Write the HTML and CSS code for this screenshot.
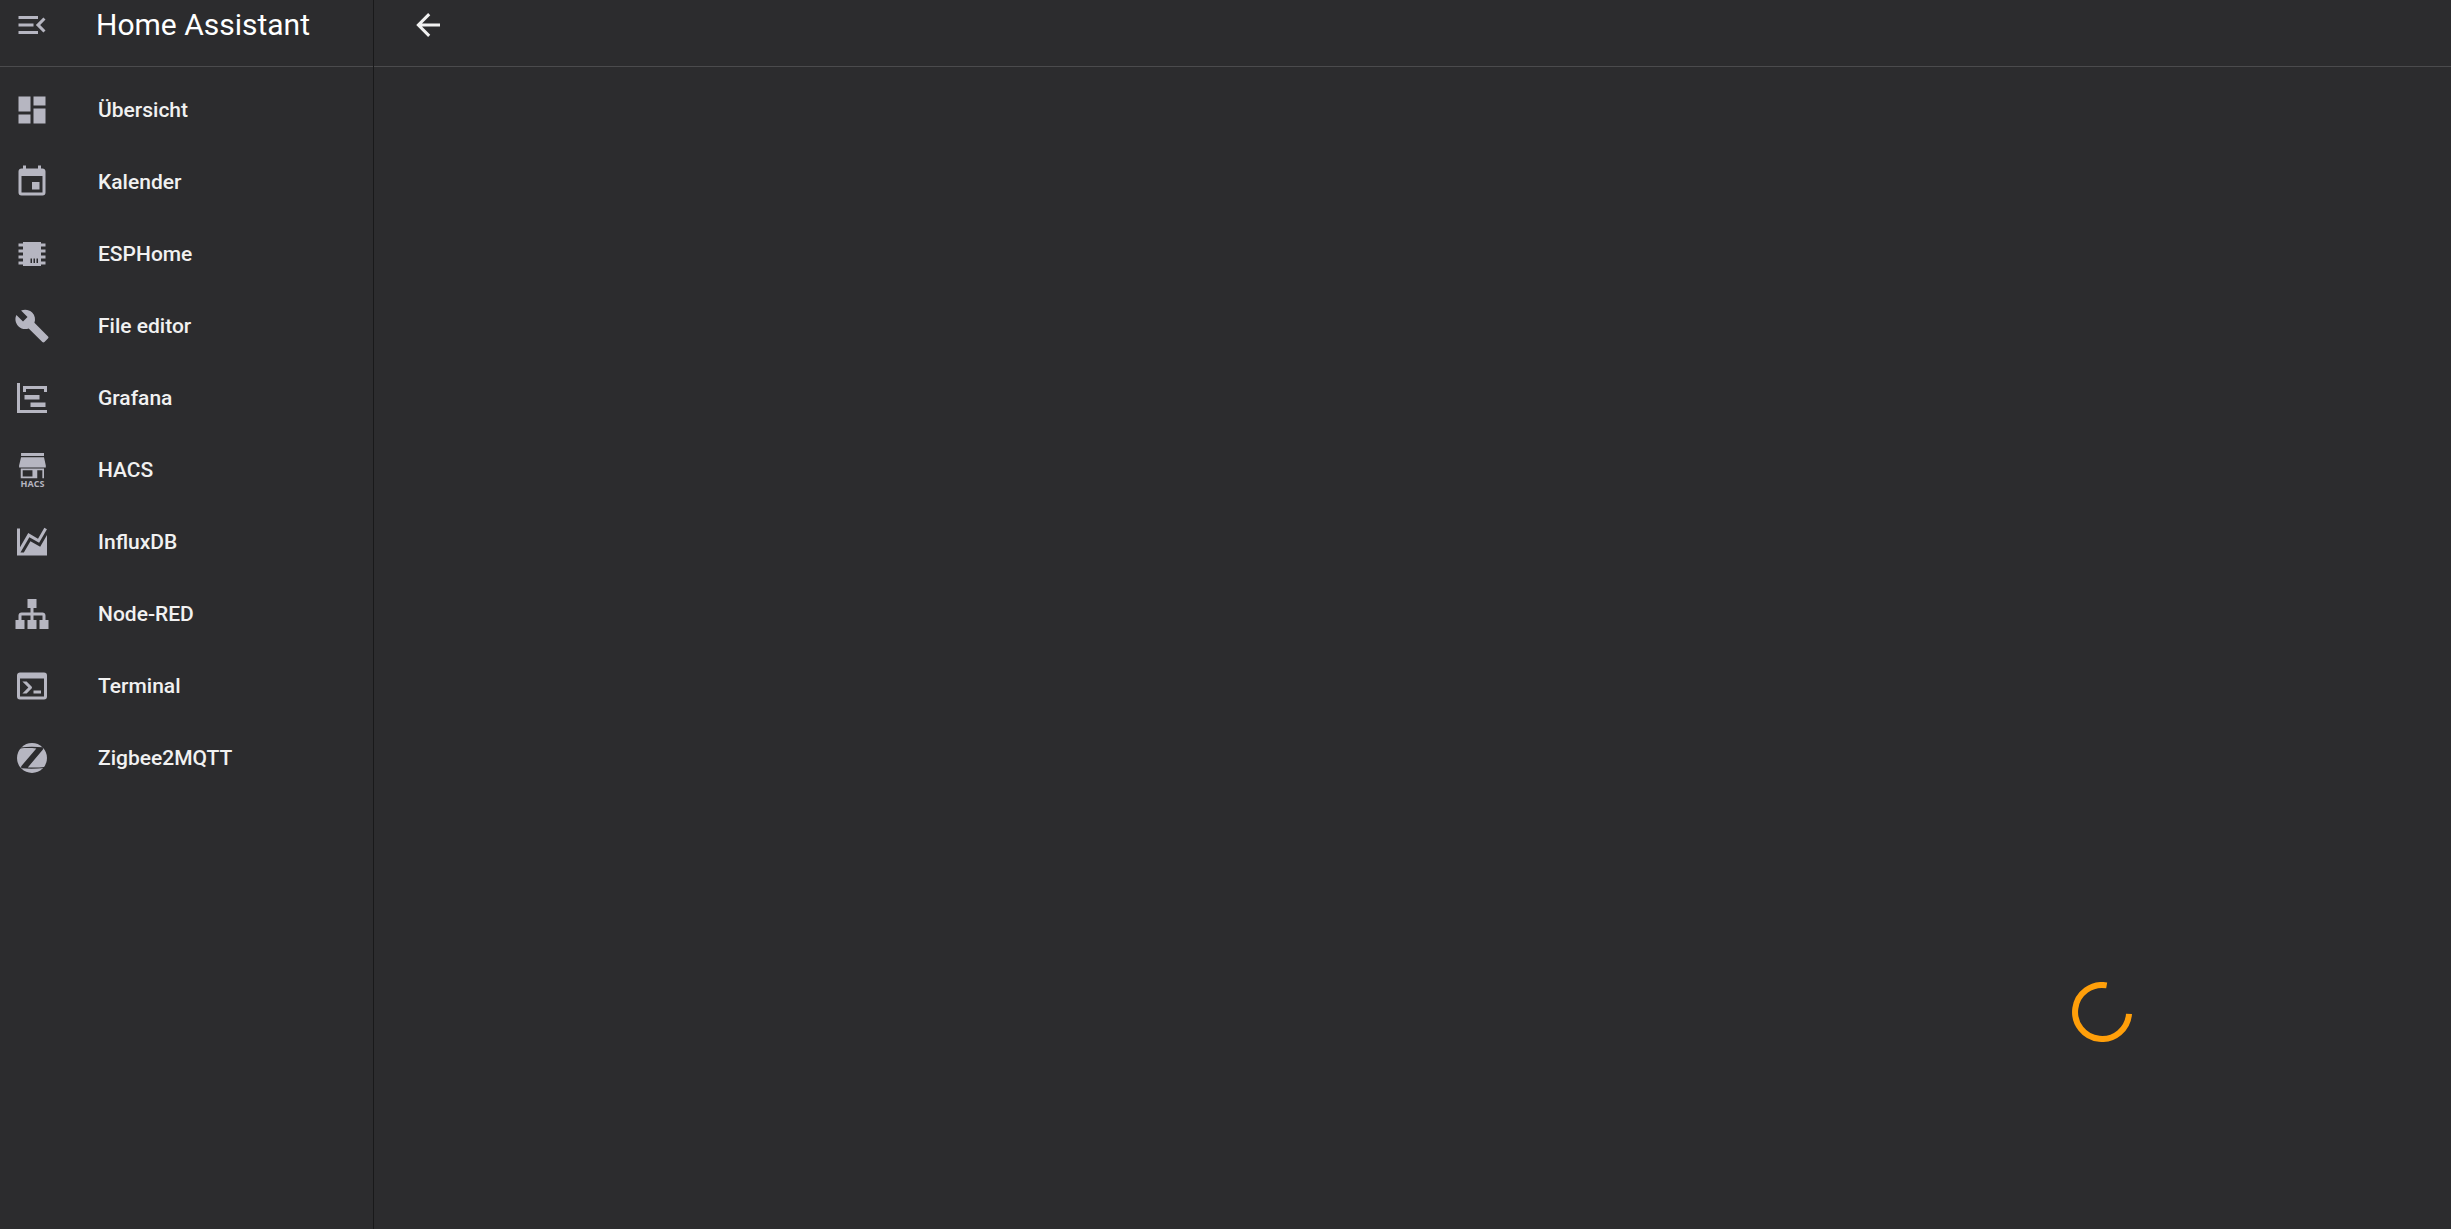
FILE: index.html
```
<!DOCTYPE html>
<html lang="de">
<head>
    <meta charset="UTF-8">
    <meta name="viewport" content="width=device-width, initial-scale=1.0">
    <title>Home Assistant</title>
    <link rel="stylesheet" href="styles.css">
</head>
<body>
    <aside class="sidebar">
        <div class="sidebar-header">
            <button class="icon-btn" type="button" aria-label="Seitenleiste umschalten">
                <svg class="icon" viewBox="0 0 24 24"><path d="M21,15.61L19.59,17L14.58,12L19.59,7L21,8.39L17.44,12L21,15.61M3,6H16V8H3V6M3,13V11H13V13H3M3,18V16H16V18H3Z"/></svg>
            </button>
            <span class="title">Home Assistant</span>
        </div>
        <nav class="menu">
            <a class="menu-item" href="#">
                <svg class="icon" viewBox="0 0 24 24"><path d="M13,3V9H21V3M13,21H21V11H13M3,21H11V15H3M3,13H11V3H3V13Z"/></svg>
                <span>Übersicht</span>
            </a>
            <a class="menu-item" href="#">
                <svg class="icon" viewBox="0 0 24 24"><path d="M19,19H5V8H19M16,1V3H8V1H6V3H5C3.89,3 3,3.89 3,5V19A2,2 0 0,0 5,21H19A2,2 0 0,0 21,19V5C21,3.89 20.1,3 19,3H18V1M17,12H12V17H17V12Z"/></svg>
                <span>Kalender</span>
            </a>
            <a class="menu-item" href="#">
                <svg class="icon" viewBox="0 0 24 24"><path fill-rule="evenodd" d="M6,4H18V5H21V7H18V9H21V11H18V13H21V15H18V17H21V19H18V20H6V19H3V17H6V15H3V13H6V11H3V9H6V7H3V5H6V4M11,15V18H12V15H11M13,15V18H14V15H13M15,15V18H16V15H15Z"/></svg>
                <span>ESPHome</span>
            </a>
            <a class="menu-item" href="#">
                <svg class="icon" viewBox="0 0 24 24"><path d="M22.7,19L13.6,9.9C14.5,7.6 14,4.9 12.1,3C10.1,1 7.1,0.6 4.7,1.7L9,6L6,9L1.6,4.7C0.4,7.1 0.9,10.1 2.9,12.1C4.8,14 7.5,14.5 9.8,13.6L18.9,22.7C19.3,23.1 19.9,23.1 20.3,22.7L22.6,20.4C23.1,20 23.1,19.3 22.7,19Z"/></svg>
                <span>File editor</span>
            </a>
            <a class="menu-item" href="#">
                <svg class="icon" viewBox="0 0 24 24"><path d="M2,2H4V20H22V22H2V2M7,10H17V13H7V10M11,15H21V18H11V15M6,4H22V8H20V6H8V8H6V4Z"/></svg>
                <span>Grafana</span>
            </a>
            <a class="menu-item" href="#">
                <svg class="icon" viewBox="0 0 24 24">
                    <path fill-rule="evenodd" d="M4.7,0.7H20V2.7H4.7V0.7M4.7,3.5H20L21.2,9V10.3H3.4V9L4.7,3.5M4.5,11H20V17.5H18.9V12.2H15.5V17.5H4.5V11M5.8,12.2V16.3H12.3V12.2H5.8Z"/>
                    <text class="icon-text" x="12.3" y="23.2">HACS</text>
                </svg>
                <span>HACS</span>
            </a>
            <a class="menu-item" href="#">
                <svg class="icon" viewBox="0 0 24 24"><path d="M17.45,15.18L22,7.31V19L22,21H2V3H4V15.54L9.5,6L16,9.78L20.24,2.45L21.97,3.45L16.74,12.5L10.23,8.75L4.31,19H6.57L10.96,11.44L17.45,15.18Z"/></svg>
                <span>InfluxDB</span>
            </a>
            <a class="menu-item" href="#">
                <svg class="icon" viewBox="0 0 24 24"><path d="M9,2V8H11V11H5C3.89,11 3,11.89 3,13V16H1V22H7V16H5V13H11V16H9V22H15V16H13V13H19V16H17V22H23V16H21V13C21,11.89 20.11,11 19,11H13V8H15V2H9Z"/></svg>
                <span>Node-RED</span>
            </a>
            <a class="menu-item" href="#">
                <svg class="icon" viewBox="0 0 24 24"><path d="M20,19V7H4V19H20M20,3A2,2 0 0,1 22,5V19A2,2 0 0,1 20,21H4A2,2 0 0,1 2,19V5C2,3.89 2.9,3 4,3H20M13,17V15H18V17H13M9.58,13L5.57,9H8.4L11.7,12.3C12.09,12.69 12.09,13.33 11.7,13.72L8.42,17H5.59L9.58,13Z"/></svg>
                <span>Terminal</span>
            </a>
            <a class="menu-item" href="#">
                <svg class="icon" viewBox="0 0 24 24">
                    <circle cx="12" cy="12" r="10"/>
                    <path class="cutout" d="M4.5,5C9,4.4 14,4.4 19.3,4.9V6.3L9.2,18.3C13,18.5 17,18.4 20.4,18V18.6C15,19.2 10,19.3 4.8,18.8V17.5L14.9,5.6C11,5.2 8,5.2 4,5.6Z"/>
                </svg>
                <span>Zigbee2MQTT</span>
            </a>
        </nav>
    </aside>

    <main class="panel">
        <header class="toolbar">
            <button class="icon-btn back-btn" type="button" aria-label="Zurück">
                <svg class="icon" viewBox="0 0 24 24"><path d="M20,11V13H8L13.5,18.5L12.08,19.92L4.16,12L12.08,4.08L13.5,5.5L8,11H20Z"/></svg>
            </button>
        </header>
        <div class="content">
            <svg class="spinner" viewBox="0 0 60 60" role="img" aria-label="Wird geladen"><path d="M34.7,3.4A27,27 0 1,0 57,31.9"/></svg>
        </div>
    </main>
</body>
</html>
```
FILE: styles.css
```
* {
    box-sizing: border-box;
}

body {
    margin: 0;
    min-height: 100vh;
    display: flex;
    background-color: #2c2c2e;
    color: #f1f1f1;
    font-family: Roboto, sans-serif;
}

.sidebar {
    width: 374px;
    flex-shrink: 0;
    border-right: 1px solid #19191a;
}

.sidebar-header,
.toolbar {
    display: flex;
    align-items: center;
    height: 67px;
    padding-bottom: 16px;
    border-bottom: 1px solid #4b4b4d;
}

.sidebar-header {
    gap: 46px;
    padding-left: 14px;
}

.title {
    color: #fff;
    font-size: 30px;
    line-height: 40px;
}

.icon-btn {
    display: flex;
    padding: 0;
    border: none;
    background: none;
    color: #b6b6c1;
    cursor: pointer;
}

.icon {
    width: 36px;
    height: 36px;
    flex-shrink: 0;
    fill: currentColor;
    overflow: visible;
}

.icon-text {
    font-family: "Open Sans", sans-serif;
    font-size: 6px;
    font-weight: bold;
    text-anchor: middle;
}

.cutout {
    fill: #2c2c2e;
}

.menu {
    display: flex;
    flex-direction: column;
    gap: 12px;
    padding: 13px 0;
}

.menu-item {
    display: flex;
    align-items: center;
    gap: 48px;
    height: 60px;
    padding-left: 14px;
    color: #f1f1f1;
    font-size: 21px;
    font-weight: 500;
    line-height: 30px;
    text-decoration: none;
}

.menu-item .icon {
    color: #b6b6c1;
}

.panel {
    flex: 1;
    display: flex;
    flex-direction: column;
}

.toolbar {
    padding-left: 36px;
}

.back-btn {
    color: #f1f1f1;
}

/* loading indicator sits towards the bottom right */
.content {
    flex: 1;
    display: flex;
    justify-content: flex-end;
    align-items: flex-end;
    padding: 0 319px 187px 0;
}

.spinner {
    width: 60px;
    height: 60px;
    fill: none;
    stroke: #ff9f0a;
    stroke-width: 6px;
}
```
